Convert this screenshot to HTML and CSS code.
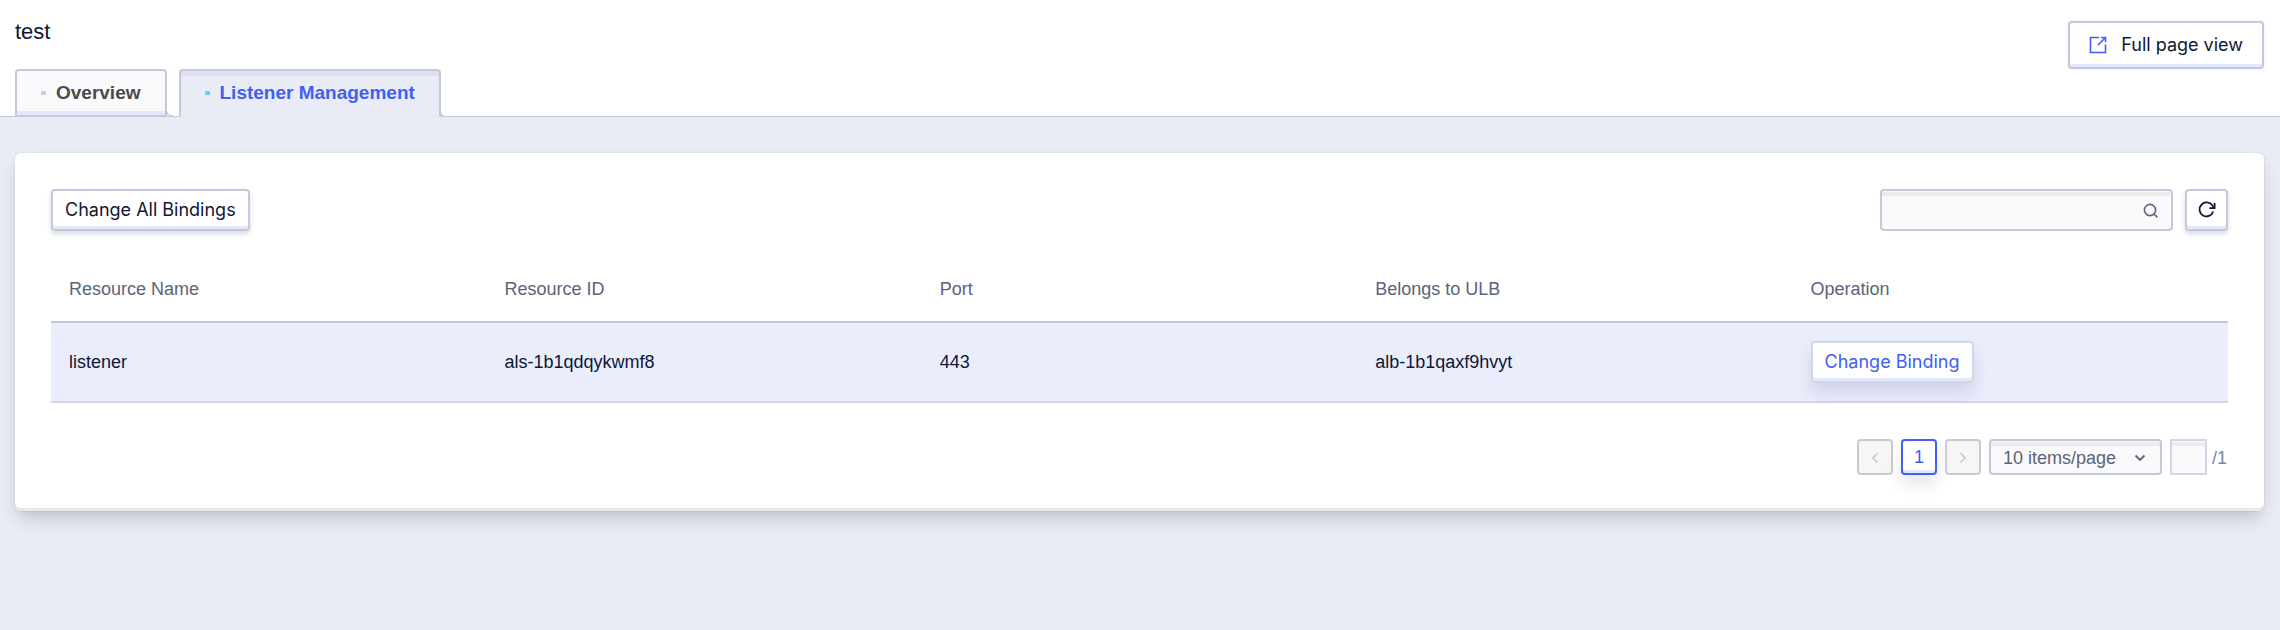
FILE: index.html
```html
<!DOCTYPE html>
<html lang="en">
<head>
  <meta charset="UTF-8" />
  <meta name="viewport" content="width=device-width, initial-scale=1.0"/>
  <title>test</title>
  <link rel="stylesheet" href="styles.css">
</head>
<body>

<header class="header">
  <div class="header-main">
    <h1>test</h1>
    <nav class="tabs">
      <a class="tab" href="#overview">Overview</a>
      <a class="tab active" href="#listener">Listener Management</a>
    </nav>
  </div>
  <button class="btn full-page">
    <svg width="18" height="18" viewBox="0 0 18 18" fill="none" stroke="currentColor" stroke-width="1.6">
      <path d="M10 1.5H1.5v15h15V8.5"/>
      <path d="M12 1.5h4.5V6M16 2L9 9"/>
    </svg>
    Full page view
  </button>
</header>

<main class="card">
  <div class="toolbar">
    <button class="btn">Change All Bindings</button>
    <div class="toolbar-right">
      <div class="search">
        <input type="text" class="field" aria-label="Search">
        <svg class="search-icon" width="16" height="16" viewBox="0 0 16 16" fill="none" stroke="currentColor" stroke-width="1.6">
          <circle cx="7" cy="7" r="5.6"/>
          <path d="M11 11l3.4 3.4"/>
        </svg>
      </div>
      <button class="btn refresh" aria-label="Refresh">
        <svg width="18" height="18" viewBox="0 0 18 18" fill="none" stroke="currentColor" stroke-width="1.8">
          <path d="M15.2 10.5A7 7 0 1 1 14.4 4.6L16.2 7"/>
          <path d="M16.6 2v5.2h-5.2"/>
        </svg>
      </button>
    </div>
  </div>

  <table class="table">
    <thead>
      <tr>
        <th>Resource Name</th>
        <th>Resource ID</th>
        <th>Port</th>
        <th>Belongs to ULB</th>
        <th>Operation</th>
      </tr>
    </thead>
    <tbody>
      <tr>
        <td>listener</td>
        <td>als-1b1qdqykwmf8</td>
        <td>443</td>
        <td>alb-1b1qaxf9hvyt</td>
        <td><button class="btn btn-action">Change Binding</button></td>
      </tr>
    </tbody>
  </table>

  <div class="pagination">
    <button class="page" disabled aria-label="Previous page">
      <svg width="10" height="12" viewBox="0 0 10 12" fill="none" stroke="currentColor" stroke-width="1.6"><path d="M7.5 2L3 7l4.5 4.5"/></svg>
    </button>
    <button class="page current">1</button>
    <button class="page" disabled aria-label="Next page">
      <svg width="10" height="12" viewBox="0 0 10 12" fill="none" stroke="currentColor" stroke-width="1.6"><path d="M2.5 2L7 7l-4.5 4.5"/></svg>
    </button>
    <div class="page-size">
      <select class="field" aria-label="Items per page">
        <option>10 items/page</option>
      </select>
      <svg class="chevron" width="12" height="8" viewBox="0 0 12 8" fill="none" stroke="currentColor" stroke-width="1.8"><path d="M1.5 1.5L6 6l4.5-4.5"/></svg>
    </div>
    <div class="jump">
      <input type="text" class="field" id="jump" aria-label="Go to page">
      <label for="jump">/1</label>
    </div>
  </div>
</main>

</body>
</html>
```

FILE: styles.css
```css
* {
  box-sizing: border-box;
}

body {
  margin: 0;
  min-height: 100vh;
  font-family: "Liberation Sans", Arial, sans-serif;
  font-size: 18px;
  line-height: 24px;
  color: #0e1736;
  background: #eaecf5;
}

button, input, select {
  font: inherit;
  color: inherit;
  margin: 0;
}

.header {
  display: flex;
  justify-content: space-between;
  align-items: flex-start;
  padding: 20px 16px 0 15px;
  background: #fff;
  border-bottom: 1px solid #c3c8db;
}

h1 {
  margin: 0;
  font-size: 22px;
  line-height: 24px;
  font-weight: 400;
}

/* tabs */
.tabs {
  display: flex;
  gap: 12px;
  margin-top: 25px;
  margin-bottom: -1px;
}

.tab {
  position: relative;
  display: flex;
  align-items: center;
  gap: 10px;
  height: 48px;
  padding: 0 24px;
  border: 2px solid #c3c8db;
  border-radius: 4px 4px 0 0;
  background: #fafafd;
  box-shadow: inset 0 -4px #e4e7fb;
  color: #4a4a4a;
  font-size: 19px;
  font-weight: 700;
  text-decoration: none;
}

.tab::before {
  content: "";
  width: 5px;
  height: 4px;
  border-radius: 1px;
  background: #cbccd6;
}

.tab.active {
  padding-bottom: 1px;
  color: #4160ee;
  background: #eaecf5;
  border-bottom: 1px solid #e3e6f1;
  box-shadow: inset 0 5px #dfdfef;
}

.tab.active::before {
  background: #68cdf0;
}

/* rounded foot where a tab meets the header line */
.tab::after {
  content: "";
  position: absolute;
  left: 100%;
  bottom: -1px;
  width: 6px;
  height: 6px;
  border-left: 2px solid #c3c8db;
  border-bottom: 1px solid #c3c8db;
  border-bottom-left-radius: 6px;
}

/* buttons */
.btn {
  display: inline-flex;
  align-items: center;
  justify-content: center;
  height: 42px;
  padding: 0 12px;
  border: 2px solid #c3c8db;
  border-radius: 4px;
  background: #fff;
  box-shadow: inset 0 -3px #e4e8fb, 0 3px 5px rgba(20, 30, 60, 0.16);
  font-family: Inter, sans-serif;
  white-space: nowrap;
  cursor: pointer;
}

.full-page {
  gap: 14px;
  height: 48px;
  margin-top: 1px;
  padding: 0 19px;
  box-shadow: inset 0 -3px #e4e8fb, 0 0 3px rgba(20, 30, 60, 0.1);
}

.full-page svg {
  color: #4160ee;
}

.btn-action {
  border-color: #d3d6e9;
  color: #4160ee;
  box-shadow: inset 0 -3px #e4e8fb, 0 10px 16px rgba(20, 30, 60, 0.12);
}

.refresh {
  width: 43px;
  padding: 0;
}

/* card */
.card {
  margin: 36px 16px 0 15px;
  padding: 36px;
  border-radius: 6px;
  background: #fff;
  box-shadow: inset 0 -3px #e8e8ea, 0 0 2px rgba(20, 30, 60, 0.16), 0 10px 18px -4px rgba(20, 25, 40, 0.22);
}

.toolbar, .toolbar-right {
  display: flex;
  justify-content: space-between;
  gap: 12px;
}

.field {
  border: 2px solid #c3c8db;
  border-radius: 4px;
  background: #fafafc;
  box-shadow: inset 0 1px #fafafc, inset 0 5px #ebecee;
  outline: none;
}

.search {
  position: relative;
}

.search .field {
  display: block;
  width: 293px;
  height: 42px;
  padding: 5px 44px 0 12px;
}

.search-icon {
  position: absolute;
  right: 14px;
  top: 14px;
  color: #5b6480;
}

/* table */
.table {
  width: 100%;
  margin: 24px 0 36px;
  table-layout: fixed;
  border-collapse: separate;
  border-spacing: 0;
}

.table th, .table td {
  padding: 0 18px;
  text-align: left;
  vertical-align: middle;
}

.table th {
  height: 68px;
  padding-top: 2px;
  border-bottom: 2px solid #c3c9d9;
  color: #5a6379;
  font-weight: 400;
}

.table td {
  height: 80px;
  border-bottom: 2px solid #d3d6e9;
  background: #eaedfc;
}

.table .btn {
  vertical-align: middle;
}

/* pagination */
.pagination {
  display: flex;
  justify-content: flex-end;
  gap: 8px;
}

.page {
  display: flex;
  align-items: center;
  justify-content: center;
  width: 36px;
  height: 36px;
  padding: 0;
  border: 2px solid #cbcbcd;
  border-radius: 4px;
  background: #f6f6f6;
  color: #cbcbcd;
}

.page.current {
  border-color: #4160ee;
  background: #fff;
  color: #4160ee;
  box-shadow: inset 0 -3px #e4e8fb, 0 10px 16px rgba(20, 30, 60, 0.1);
}

.page-size {
  position: relative;
  color: #5a6379;
}

.page-size .field {
  display: block;
  width: 173px;
  height: 36px;
  padding: 2px 36px 0 12px;
  appearance: none;
}

.chevron {
  position: absolute;
  right: 16px;
  top: 15px;
  pointer-events: none;
}

.jump {
  display: flex;
  align-items: center;
  gap: 5px;
  color: #7a85a8;
}

.jump .field {
  width: 37px;
  height: 36px;
  border-color: #d3d6e9;
  border-radius: 0;
}

.jump label {
  padding: 2px 1px 0 0;
}
```
